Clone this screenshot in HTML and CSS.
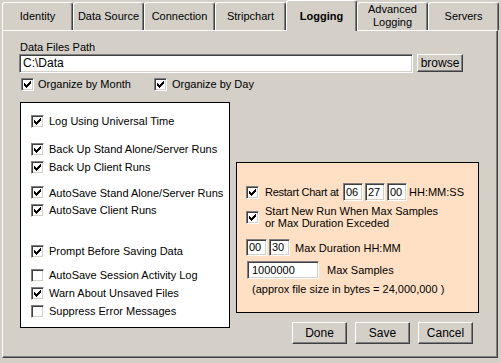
FILE: index.html
```html
<!DOCTYPE html>
<html>
<head>
<meta charset="utf-8">
<link rel="stylesheet" href="styles.css">
</head>
<body>
<div class="tabs">
  <div class="tab">Identity</div>
  <div class="tab">Data Source</div>
  <div class="tab">Connection</div>
  <div class="tab">Stripchart</div>
  <div class="tab sel">Logging</div>
  <div class="tab">Advanced<br>Logging</div>
  <div class="tab">Servers</div>
</div>
<div class="panel">
  <div class="lbl">Data Files Path</div>
  <div class="path-row">
    <div class="inp path">C:\Data</div>
    <div class="btn browse">browse</div>
  </div>
  <div class="org-row">
    <div class="chk org1"><span class="cb"><svg class="ck" viewBox="0 0 7 7"><path d="M0 2h1v3H0zM1 3h1v3H1zM2 4h1v3H2zM3 3h1v3H3zM4 2h1v3H4zM5 1h1v3H5zM6 0h1v3H6z"/></svg></span>Organize by Month</div>
    <div class="chk org2"><span class="cb"><svg class="ck" viewBox="0 0 7 7"><path d="M0 2h1v3H0zM1 3h1v3H1zM2 4h1v3H2zM3 3h1v3H3zM4 2h1v3H4zM5 1h1v3H5zM6 0h1v3H6z"/></svg></span>Organize by Day</div>
  </div>
  <div class="main-row">
    <div class="wbox">
      <div class="chk row"><span class="cb"><svg class="ck" viewBox="0 0 7 7"><path d="M0 2h1v3H0zM1 3h1v3H1zM2 4h1v3H2zM3 3h1v3H3zM4 2h1v3H4zM5 1h1v3H5zM6 0h1v3H6z"/></svg></span>Log Using Universal Time</div>
      <div class="chk row mt10"><span class="cb"><svg class="ck" viewBox="0 0 7 7"><path d="M0 2h1v3H0zM1 3h1v3H1zM2 4h1v3H2zM3 3h1v3H3zM4 2h1v3H4zM5 1h1v3H5zM6 0h1v3H6z"/></svg></span>Back Up Stand Alone/Server Runs</div>
      <div class="chk row"><span class="cb"><svg class="ck" viewBox="0 0 7 7"><path d="M0 2h1v3H0zM1 3h1v3H1zM2 4h1v3H2zM3 3h1v3H3zM4 2h1v3H4zM5 1h1v3H5zM6 0h1v3H6z"/></svg></span>Back Up Client Runs</div>
      <div class="chk row short mt8"><span class="cb"><svg class="ck" viewBox="0 0 7 7"><path d="M0 2h1v3H0zM1 3h1v3H1zM2 4h1v3H2zM3 3h1v3H3zM4 2h1v3H4zM5 1h1v3H5zM6 0h1v3H6z"/></svg></span>AutoSave Stand Alone/Server Runs</div>
      <div class="chk row"><span class="cb"><svg class="ck" viewBox="0 0 7 7"><path d="M0 2h1v3H0zM1 3h1v3H1zM2 4h1v3H2zM3 3h1v3H3zM4 2h1v3H4zM5 1h1v3H5zM6 0h1v3H6z"/></svg></span>AutoSave Client Runs</div>
      <div class="chk row mt23"><span class="cb"><svg class="ck" viewBox="0 0 7 7"><path d="M0 2h1v3H0zM1 3h1v3H1zM2 4h1v3H2zM3 3h1v3H3zM4 2h1v3H4zM5 1h1v3H5zM6 0h1v3H6z"/></svg></span>Prompt Before Saving Data</div>
      <div class="chk row mt6"><span class="cb"></span>AutoSave Session Activity Log</div>
      <div class="chk row"><span class="cb"><svg class="ck" viewBox="0 0 7 7"><path d="M0 2h1v3H0zM1 3h1v3H1zM2 4h1v3H2zM3 3h1v3H3zM4 2h1v3H4zM5 1h1v3H5zM6 0h1v3H6z"/></svg></span>Warn About Unsaved Files</div>
      <div class="chk row"><span class="cb"></span>Suppress Error Messages</div>
    </div>
    <div class="rcol">
      <div class="obox">
        <div class="chk orow1"><span class="cb"><svg class="ck" viewBox="0 0 7 7"><path d="M0 2h1v3H0zM1 3h1v3H1zM2 4h1v3H2zM3 3h1v3H3zM4 2h1v3H4zM5 1h1v3H5zM6 0h1v3H6z"/></svg></span><span class="rtxt">Restart Chart at</span><span class="inp t2">06</span><span class="inp t2">27</span><span class="inp t2">00</span><span class="hms">HH:MM:SS</span></div>
        <div class="chk orow2"><span class="cb"><svg class="ck" viewBox="0 0 7 7"><path d="M0 2h1v3H0zM1 3h1v3H1zM2 4h1v3H2zM3 3h1v3H3zM4 2h1v3H4zM5 1h1v3H5zM6 0h1v3H6z"/></svg></span><span class="two">Start New Run When Max Samples<br>or Max Duration Exceded</span></div>
        <div class="orow3"><span class="inp t3">00</span><span class="inp t3">30</span><span class="dur">Max Duration HH:MM</span></div>
        <div class="orow4"><span class="inp samp">1000000</span><span class="ms">Max Samples</span></div>
        <div class="approx">(approx file size in bytes = 24,000,000 )</div>
      </div>
      <div class="buttons">
        <div class="btn act">Done</div>
        <div class="btn act">Save</div>
        <div class="btn act">Cancel</div>
      </div>
    </div>
  </div>
</div>
</body>
</html>
```
FILE: styles.css
```css
body {
  margin: 0;
  width: 501px;
  height: 363px;
  overflow: hidden;
  background: #d4d0c8;
  font: 11px "Liberation Sans", Arial, sans-serif;
  color: #000;
}
.tabs {
  display: flex;
  align-items: flex-end;
  height: 30px;
  padding-left: 2px;
  position: relative;
  z-index: 1;
}
.tab {
  width: 71px;
  height: 28px;
  box-sizing: border-box;
  border-left: 1px solid #fff;
  border-top: 1px solid #fff;
  border-right: 1px solid #404040;
  box-shadow: inset -1px 0 #808080;
  border-radius: 3px 3px 0 0;
  background: #d4d0c8;
  display: flex;
  align-items: center;
  justify-content: center;
  text-align: center;
  line-height: 13px;
  padding-bottom: 1px;
}
.tab.sel {
  height: 31px;
  margin-bottom: -1px;
  font-weight: bold;
  padding-bottom: 0;
}
.panel {
  height: 328px;
  box-sizing: border-box;
  margin: 0 3px 0 2px;
  border-left: 1px solid #fff;
  border-top: 1px solid #fff;
  border-right: 1px solid #404040;
  border-bottom: 1px solid #404040;
  box-shadow: inset -1px -1px #808080;
  padding: 10px 0 0 16px;
}
.lbl {
  line-height: 13px;
  margin-left: 1px;
}
.path-row {
  display: flex;
  align-items: flex-start;
  gap: 4px;
}
.inp {
  display: inline-block;
  box-sizing: border-box;
  background: #fff;
  border: 1px solid;
  border-color: #808080 #fff #fff #808080;
  box-shadow: inset 1px 1px #404040, inset -1px -1px #d4d0c8;
  padding-left: 3px;
}
.path {
  width: 394px;
  height: 19px;
  line-height: 17px;
  font-size: 12px;
}
.btn {
  box-sizing: border-box;
  background: #d4d0c8;
  border: 1px solid;
  border-color: #fff #404040 #404040 #fff;
  box-shadow: inset -1px -1px #808080;
  text-align: center;
}
.browse {
  width: 46px;
  height: 18px;
  line-height: 16px;
  font-size: 12px;
}
.org-row {
  display: flex;
  height: 18px;
  margin-top: 2px;
}
.chk {
  display: flex;
  align-items: center;
}
.cb {
  flex: none;
  width: 13px;
  height: 13px;
  box-sizing: border-box;
  background: #fff;
  border: 1px solid;
  border-color: #808080 #fff #fff #808080;
  box-shadow: inset 1px 1px #404040, inset -1px -1px #d4d0c8;
  padding: 2px;
  display: flex;
}
.ck {
  width: 7px;
  height: 7px;
  display: block;
}
.org1 {
  margin-left: 2px;
  gap: 4px;
  width: 133px;
}
.org2 {
  gap: 5px;
}
.main-row {
  display: flex;
  align-items: flex-start;
  margin-top: 9px;
}
.wbox {
  width: 210px;
  height: 226px;
  margin-left: 1px;
  box-sizing: border-box;
  background: #fff;
  border: 1px solid #000;
  padding: 9px 0 0 10px;
}
.row {
  height: 18px;
  gap: 5px;
}
.row.short { height: 17px; }
.mt10 { margin-top: 10px; }
.mt8 { margin-top: 8px; }
.mt23 { margin-top: 23px; }
.mt6 { margin-top: 6px; }
.rcol {
  margin-left: 6px;
  margin-top: 60px;
}
.obox {
  width: 243px;
  height: 151px;
  box-sizing: border-box;
  background: #ffe0c4;
  border: 1px solid #000;
  padding: 20px 0 0 9px;
}
.orow1 {
  height: 18px;
}
.rtxt {
  margin-left: 6px;
  width: 78px;
  letter-spacing: -0.25px;
}
.t2 {
  width: 20px;
  height: 18px;
  line-height: 16px;
  margin-right: 2px;
  padding-left: 2px;
}
.orow2 {
  margin-top: 4px;
  height: 24px;
}
.two {
  margin-left: 6px;
  line-height: 12px;
}
.orow3 {
  display: flex;
  align-items: center;
  margin-top: 10px;
  height: 17px;
}
.t3 {
  width: 21px;
  height: 17px;
  line-height: 15px;
  margin-right: 2px;
  padding-left: 2px;
}
.dur {
  margin-left: 3px;
}
.orow4 {
  display: flex;
  align-items: center;
  margin-top: 5px;
  height: 18px;
}
.samp {
  width: 72px;
  height: 18px;
  line-height: 16px;
  margin-left: 1px;
  padding-left: 4px;
}
.ms {
  margin-left: 8px;
}
.approx {
  margin-top: 4px;
  margin-left: 6px;
  line-height: 13px;
}
.buttons {
  display: flex;
  justify-content: flex-end;
  gap: 8px;
  margin-top: 9px;
  padding-right: 6px;
}
.act {
  width: 55px;
  height: 22px;
  line-height: 20px;
  font-size: 12px;
}
```
